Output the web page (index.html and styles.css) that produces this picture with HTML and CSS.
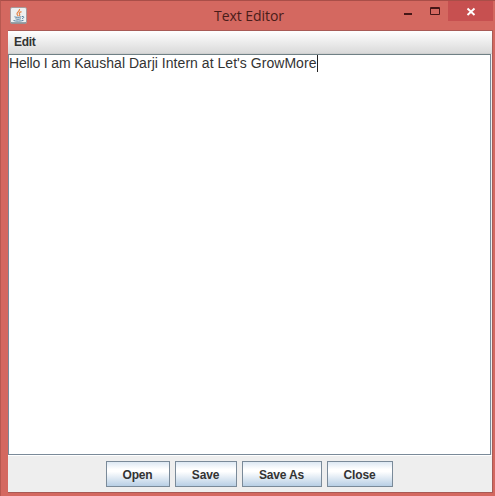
FILE: index.html
```html
<!DOCTYPE html>
<html lang="en">
<head>
<meta charset="utf-8">
<title>Text Editor</title>
<link rel="stylesheet" href="styles.css">
</head>
<body>
<div class="window">
  <header class="titlebar">
    <svg class="app-icon" width="17" height="17" viewBox="0 0 17 17">
      <rect x=".5" y=".5" width="16" height="16" rx="1.5" fill="#eef0f0" stroke="#a69a9b"/>
      <path d="M1 15.8H16" stroke="#71808a"/>
      <path d="M9.500 2C10.500 4.500 4.500 5.500 8.200 9M11.500 4.600C8.500 5.800 9.200 6.500 9.700 7.300 10 8 9.500 8.600 9 9" fill="none" stroke="#e58345" stroke-width="1.2"/>
      <path d="M4.500 9.800C6 10.500 9 10.500 11.300 9.800M5.500 11.800C7 12.400 9 12.400 10.800 11.800M12 9.500C14.500 9 14.300 11 12 11.700M3.500 13.500C5.500 14.400 11.500 14.300 13.500 13.300" fill="none" stroke="#567f9f"/>
    </svg>
    <h1 class="title">Text Editor</h1>
    <div class="controls">
      <svg class="control" width="27" height="21" viewBox="0 0 27 21"><path d="M10 14H18" stroke="#451717" stroke-width="2"/></svg>
      <svg class="control" width="27" height="21" viewBox="0 0 27 21"><path d="M9.500 7.500H18.500V14.500H9.500ZM9 8.500H19" fill="none" stroke="#451717"/></svg>
      <svg class="control close" width="45" height="21" viewBox="0 0 45 21"><path d="M19.500 8.500L26.500 15M26.500 8.500L19.500 15" stroke="#fff" stroke-width="1.900"/></svg>
    </div>
  </header>
  <main class="content">
    <nav class="menubar"><span class="menu">Edit</span></nav>
    <div class="editor"><span class="text"><span class="lead">Hello I am </span><span class="rest">Kaushal Darji Intern at Let's GrowMore</span></span><span class="caret"></span></div>
    <footer class="actions">
      <button class="button open">Open</button>
      <button class="button save">Save</button>
      <button class="button save-as">Save As</button>
      <button class="button close-file">Close</button>
    </footer>
  </main>
</div>
</body>
</html>
```
FILE: styles.css
```css
* { box-sizing: border-box; }
body { margin: 0; }
.window {
  display: flex;
  flex-direction: column;
  width: 495px;
  height: 496px;
  padding: 0 2px 3px 7px;
  overflow: hidden;
  background: #d46860;
  border-top: 1px solid #a94e48;
  border-left: 1px solid #b75850;
  font-family: "Liberation Sans", Arial, sans-serif;
}
.titlebar {
  display: grid;
  grid-template-columns: 206px 1fr 99px;
  height: 29px;
}
.app-icon { margin: 6px 0 0 2px; }
.title {
  margin: 4px 0 0;
  color: #491c19;
  font: 400 14px/22px "Open Sans", "Noto Sans", sans-serif;
  letter-spacing: -.05px;
  white-space: nowrap;
}
.controls { display: flex; margin-top: -1px; }
.control { flex: none; }
.close { background: #c75050; }
.content {
  display: flex;
  flex: 1;
  flex-direction: column;
  background: #eee;
  border: 1px solid #a85a55;
  border-width: 1px 1px 1px 0;
}
.menubar {
  height: 23px;
  padding: 4px 6px;
  background: linear-gradient(#fff, #dadada);
  border-bottom: 1px solid #d0d0d0;
  color: #333;
  font-size: 12px;
  font-weight: 700;
  letter-spacing: -.3px;
  line-height: 15px;
}
.editor {
  display: flex;
  height: 401px;
  margin-right: 1px;
  background: #fff;
  border: 1px solid #7a8a99;
  border-top-color: #6f8085;
  color: #333;
  font-size: 14px;
  line-height: 16px;
  white-space: nowrap;
}
.text { width: 308px; }
.lead { letter-spacing: -.16px; }
.rest { letter-spacing: .04px; }
.caret { width: 1px; height: 17px; background: #222; }
.actions {
  display: flex;
  justify-content: center;
  gap: 5px;
  padding: 5px 2px 0 0;
  border-top: 1px solid #fff;
}
.button {
  height: 26px;
  padding: 2px 0 0;
  background: linear-gradient(#dde8f3 0, #fff 30%, #fff 40%, #b8cfe5);
  border: 1px solid #7a8a99;
  color: #333;
  font: 700 12px/22px "Liberation Sans", Arial, sans-serif;
  letter-spacing: -.15px;
}
.open { width: 64px; }
.save { width: 62px; }
.save-as { width: 80px; }
.close-file { width: 66px; }
```
